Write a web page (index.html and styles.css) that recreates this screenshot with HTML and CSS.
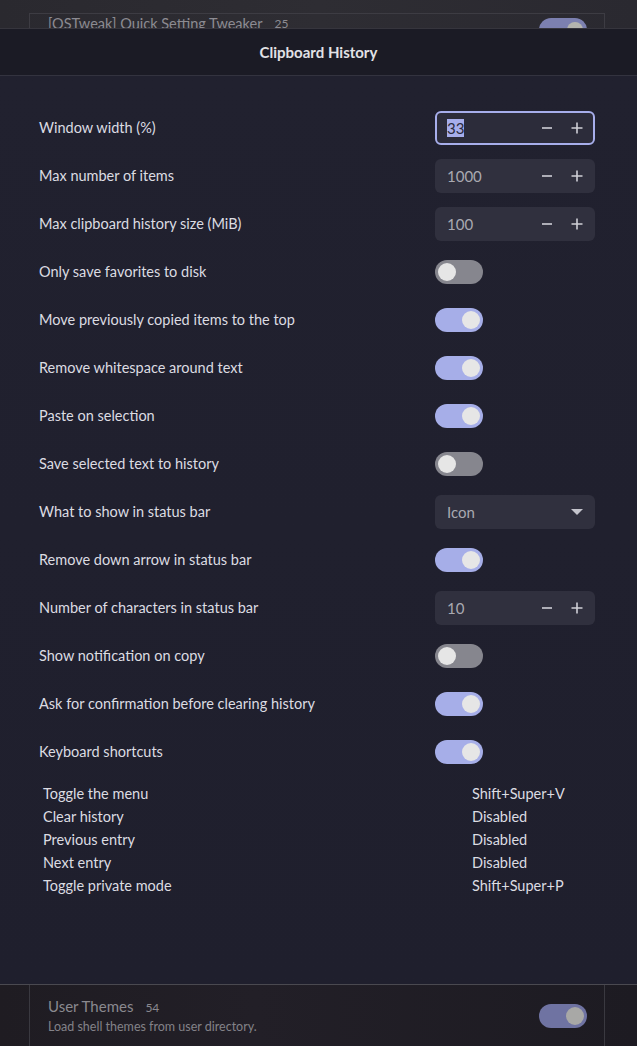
FILE: index.html
```html
<!DOCTYPE html>
<html>
<head>
<meta charset="utf-8">
<link rel="stylesheet" href="styles.css">
</head>
<body>
<div class="backdrop-top">
  <div class="bd-card">
    <div class="bd-row">
      <span class="bd-title">[QSTweak] Quick Setting Tweaker</span><span class="bd-count">25</span>
      <span class="bd-toggle"><span class="bd-knob"></span></span>
    </div>
  </div>
</div>
<div class="dialog">
  <div class="header">Clipboard History</div>
  <div class="content">
    <div class="row"><span class="label">Window width (%)</span>
      <div class="spin focus"><span class="val"><span class="sel">33</span></span>
        <span class="btn"><svg width="12" height="12" viewBox="0 0 12 12"><path d="M1 6 H11" stroke="#cfcfd6" stroke-width="1.6"/></svg></span>
        <span class="btn"><svg width="12" height="12" viewBox="0 0 12 12"><path d="M0.5 6 H11.5 M6 0.5 V11.5" stroke="#cfcfd6" stroke-width="1.6"/></svg></span></div></div>
    <div class="row"><span class="label">Max number of items</span>
      <div class="spin"><span class="val">1000</span>
        <span class="btn"><svg width="12" height="12" viewBox="0 0 12 12"><path d="M1 6 H11" stroke="#cfcfd6" stroke-width="1.6"/></svg></span>
        <span class="btn"><svg width="12" height="12" viewBox="0 0 12 12"><path d="M0.5 6 H11.5 M6 0.5 V11.5" stroke="#cfcfd6" stroke-width="1.6"/></svg></span></div></div>
    <div class="row"><span class="label">Max clipboard history size (MiB)</span>
      <div class="spin"><span class="val">100</span>
        <span class="btn"><svg width="12" height="12" viewBox="0 0 12 12"><path d="M1 6 H11" stroke="#cfcfd6" stroke-width="1.6"/></svg></span>
        <span class="btn"><svg width="12" height="12" viewBox="0 0 12 12"><path d="M0.5 6 H11.5 M6 0.5 V11.5" stroke="#cfcfd6" stroke-width="1.6"/></svg></span></div></div>
    <div class="row"><span class="label">Only save favorites to disk</span>
      <div class="ctl"><span class="switch"><span class="knob"></span></span></div></div>
    <div class="row"><span class="label">Move previously copied items to the top</span>
      <div class="ctl"><span class="switch on"><span class="knob"></span></span></div></div>
    <div class="row"><span class="label">Remove whitespace around text</span>
      <div class="ctl"><span class="switch on"><span class="knob"></span></span></div></div>
    <div class="row"><span class="label">Paste on selection</span>
      <div class="ctl"><span class="switch on"><span class="knob"></span></span></div></div>
    <div class="row"><span class="label">Save selected text to history</span>
      <div class="ctl"><span class="switch"><span class="knob"></span></span></div></div>
    <div class="row"><span class="label">What to show in status bar</span>
      <div class="combo"><span class="val">Icon</span><svg class="arrow" width="12" height="6" viewBox="0 0 12 6"><path d="M0 0 L12 0 L6 6 Z" fill="#c4c4cc"/></svg></div></div>
    <div class="row"><span class="label">Remove down arrow in status bar</span>
      <div class="ctl"><span class="switch on"><span class="knob"></span></span></div></div>
    <div class="row"><span class="label">Number of characters in status bar</span>
      <div class="spin"><span class="val">10</span>
        <span class="btn"><svg width="12" height="12" viewBox="0 0 12 12"><path d="M1 6 H11" stroke="#cfcfd6" stroke-width="1.6"/></svg></span>
        <span class="btn"><svg width="12" height="12" viewBox="0 0 12 12"><path d="M0.5 6 H11.5 M6 0.5 V11.5" stroke="#cfcfd6" stroke-width="1.6"/></svg></span></div></div>
    <div class="row"><span class="label">Show notification on copy</span>
      <div class="ctl"><span class="switch"><span class="knob"></span></span></div></div>
    <div class="row"><span class="label">Ask for confirmation before clearing history</span>
      <div class="ctl"><span class="switch on"><span class="knob"></span></span></div></div>
    <div class="row"><span class="label">Keyboard shortcuts</span>
      <div class="ctl"><span class="switch on"><span class="knob"></span></span></div></div>
    <div class="shortcuts">
      <div class="sc"><span class="sc-name">Toggle the menu</span><span class="sc-key">Shift+Super+V</span></div>
      <div class="sc"><span class="sc-name">Clear history</span><span class="sc-key">Disabled</span></div>
      <div class="sc"><span class="sc-name">Previous entry</span><span class="sc-key">Disabled</span></div>
      <div class="sc"><span class="sc-name">Next entry</span><span class="sc-key">Disabled</span></div>
      <div class="sc"><span class="sc-name">Toggle private mode</span><span class="sc-key">Shift+Super+P</span></div>
    </div>
  </div>
</div>
<div class="backdrop-bottom">
  <div class="bd-card2">
    <div class="ut">
      <div class="ut-text">
        <div class="ut-title">User Themes<span class="ut-count">54</span></div>
        <div class="ut-desc">Load shell themes from user directory.</div>
      </div>
      <span class="bd-toggle2"><span class="bd-knob2"></span></span>
    </div>
  </div>
</div>
</body>
</html>
```
FILE: styles.css
```css
html, body {
  margin: 0;
  padding: 0;
}
body {
  width: 637px;
  height: 1046px;
  overflow: hidden;
  background: #26242b;
  font-family: Lato, "Noto Sans", sans-serif;
  color: #dcdce2;
  display: flex;
  flex-direction: column;
}
.backdrop-top {
  height: 28px;
  overflow: hidden;
  background: linear-gradient(90deg, #2a292f, #2e2d33 50%, #2a2930);
  position: relative;
  flex: none;
}
.bd-card {
  margin: 13px 32px 0 29px;
  border-top: 1px solid #3d3c43;
  border-left: 1px solid #3d3c43;
  border-right: 1px solid #3d3c43;
  height: 40px;
}
.bd-row {
  display: flex;
  align-items: center;
  padding: 0 0 0 18px;
  height: 18px;
}
.bd-title {
  font-size: 14.5px;
  color: #8c8b92;
}
.bd-count {
  font-size: 12px;
  color: #8c8b92;
  margin-left: 12px;
}
.bd-toggle {
  margin-left: auto;
  margin-right: 17px;
  margin-top: 14px;
  width: 48px;
  height: 24px;
  border-radius: 12px;
  background: #7c80b0;
  position: relative;
}
.bd-knob {
  position: absolute;
  right: 4px;
  top: 4px;
  width: 16px;
  height: 16px;
  border-radius: 50%;
  background: #b4b4ae;
}
.dialog {
  flex: none;
  display: flex;
  flex-direction: column;
  border-top: 1px solid #36353d;
}
.header {
  height: 45px;
  padding-bottom: 1px;
  background: #1b1b25;
  border-bottom: 1px solid #33333f;
  display: flex;
  align-items: center;
  justify-content: center;
  font-weight: bold;
  font-size: 15px;
  color: #e2e2e6;
}
.content {
  height: 908px;
  background: linear-gradient(180deg, #21212f, #1f1f2d);
  padding: 28px 42px 0 39px;
  box-sizing: border-box;
}
.row {
  height: 48px;
  display: flex;
  align-items: center;
  justify-content: space-between;
}
.label {
  font-size: 14.5px;
  color: #dcdce2;
  margin-top: -2px;
}
.spin, .combo {
  width: 160px;
  height: 34px;
  box-sizing: border-box;
  border-radius: 6px;
  background: #30303e;
  display: flex;
  align-items: center;
  padding: 0 3px 0 12px;
  font-size: 15px;
  color: #a9a9b1;
}
.combo {
  padding-right: 12px;
}
.spin.focus {
  border: 2px solid #a7aeeb;
  background: #2c2c3a;
  padding: 0 1px 0 10px;
}
.val {
  flex: 1;
}
.sel {
  background: #a7aeeb;
  color: #2a2a3a;
}
.btn {
  width: 30px;
  height: 12px;
  display: flex;
  justify-content: center;
  align-items: center;
}
.btn svg {
  display: block;
}
.ctl {
  width: 160px;
}
.switch {
  display: block;
  width: 48px;
  height: 24px;
  border-radius: 12px;
  background: #86868e;
  position: relative;
}
.switch .knob {
  position: absolute;
  left: 3px;
  top: 3px;
  width: 18px;
  height: 18px;
  border-radius: 50%;
  background: #e6e6e6;
}
.switch.on {
  background: #a6aee8;
}
.switch.on .knob {
  left: auto;
  right: 3px;
}
.shortcuts {
  margin-top: 6px;
  padding-left: 4px;
}
.sc {
  height: 23px;
  display: flex;
  align-items: center;
  font-size: 14.5px;
  color: #dcdce2;
}
.sc-name {
  width: 429px;
}
.backdrop-bottom {
  flex: 1;
  border-top: 1px solid #4a4950;
  background: linear-gradient(90deg, #1f1c22, #221f27 40%, #1d1b22);
}
.bd-card2 {
  margin: 0 32px 0 29px;
  border-left: 1px solid #3a3940;
  border-right: 1px solid #3a3940;
  height: 100%;
}
.ut {
  display: flex;
  align-items: center;
  padding: 12px 17px 0 18px;
}
.ut-text {
  flex: 1;
}
.ut-title {
  font-size: 15px;
  color: #8a898f;
}
.ut-count {
  font-size: 12px;
  margin-left: 12px;
}
.ut-desc {
  font-size: 12.5px;
  color: #838288;
  margin-top: 4px;
}
.bd-toggle2 {
  width: 48px;
  height: 24px;
  border-radius: 12px;
  background: #6f73a2;
  position: relative;
}
.bd-knob2 {
  position: absolute;
  right: 3px;
  top: 3px;
  width: 18px;
  height: 18px;
  border-radius: 50%;
  background: #a8a8a6;
}
```
